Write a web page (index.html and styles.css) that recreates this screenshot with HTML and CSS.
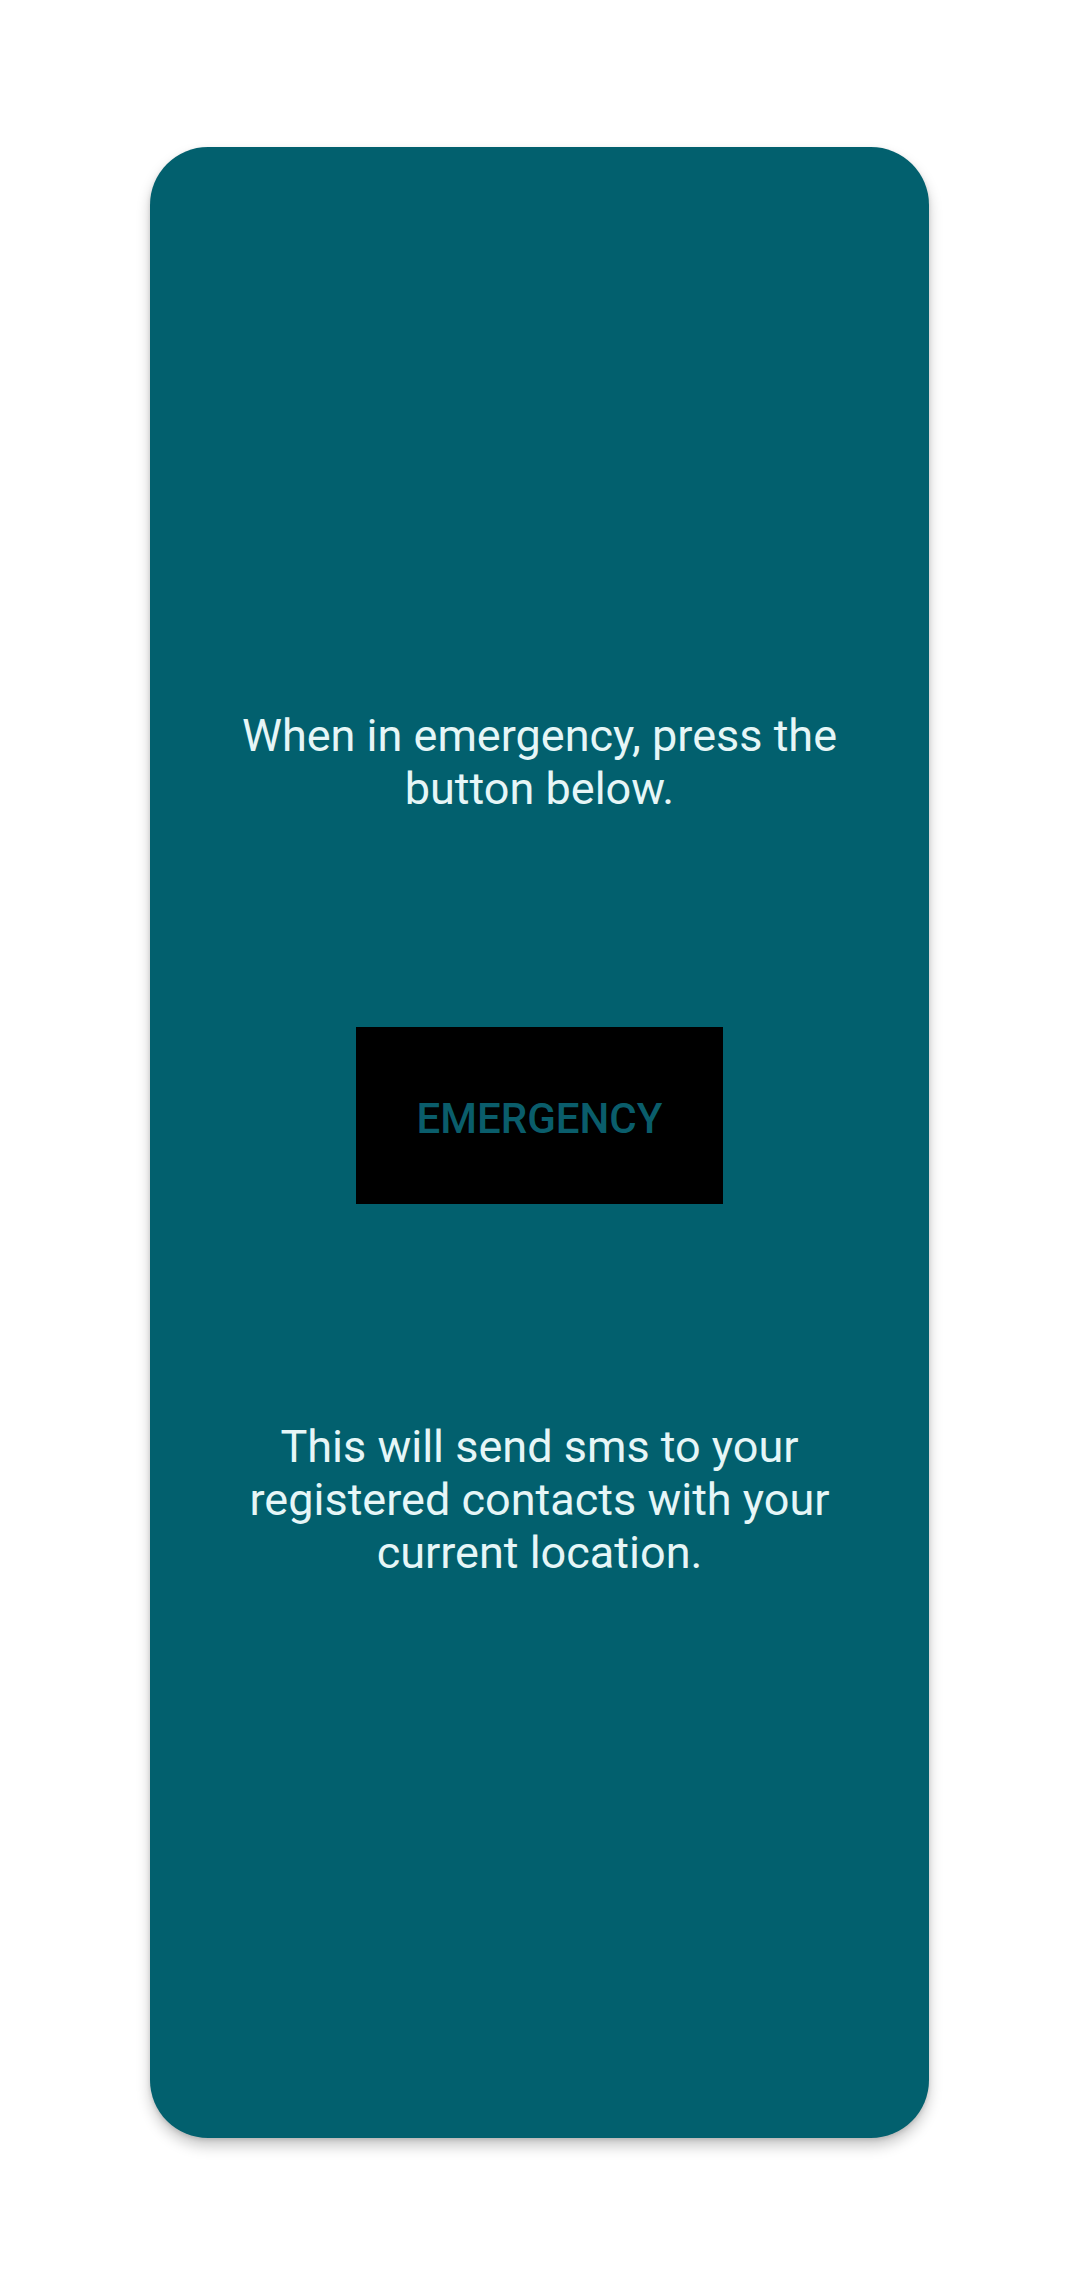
FILE: index.html
```html
<!DOCTYPE html>
<html lang="en">
<head>
<meta charset="utf-8">
<title>Emergency</title>
<link rel="stylesheet" href="styles.css">
</head>
<body>
<main class="card">
  <p class="message">When in emergency, press the button below.</p>
  <button class="emergency-btn" type="button">EMERGENCY</button>
  <p class="message message-bottom">This will send sms to your registered contacts with your current location.</p>
</main>
</body>
</html>
```
FILE: styles.css
```css
html, body {
  margin: 0;
  padding: 0;
  background: #ffffff;
}

body {
  width: 1080px;
  height: 2289px;
  padding-top: 147px;
  box-sizing: border-box;
  font-family: Roboto, "Noto Sans", sans-serif;
}

.card {
  width: 779px;
  height: 1991px;
  margin-left: 150px;
  box-sizing: border-box;
  background: #02606e;
  border-radius: 58px;
  box-shadow: 0 8px 14px rgba(0, 0, 0, 0.22), 0 2px 4px rgba(0, 0, 0, 0.12);
  display: flex;
  flex-direction: column;
  align-items: center;
  padding-top: 562px;
}

.message {
  margin: 0;
  width: 610px;
  font-size: 45px;
  line-height: normal;
  font-weight: 400;
  color: #e6f6f7;
  text-align: center;
}

.emergency-btn {
  margin-top: 212px;
  width: 367px;
  height: 177px;
  box-sizing: border-box;
  background: #000000;
  border: none;
  border-radius: 0;
  padding: 5px 0 0 0;
  font-family: Roboto, "Noto Sans", sans-serif;
  font-size: 42px;
  font-weight: 500;
  letter-spacing: 0;
  color: #0a5d6b;
  display: flex;
  align-items: center;
  justify-content: center;
}

.message-bottom {
  margin-top: 216px;
}
```
